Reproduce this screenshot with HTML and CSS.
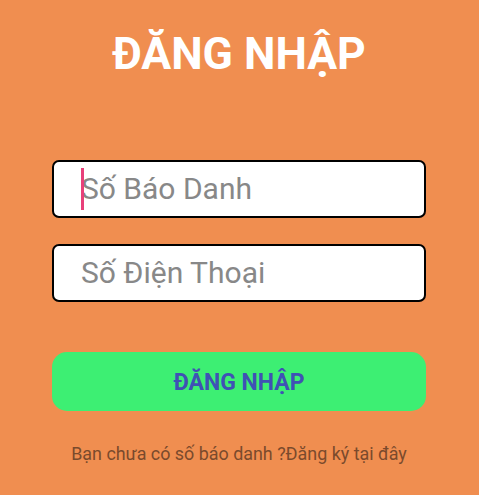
FILE: index.html
```html
<!DOCTYPE html>
<html lang="vi">
<head>
<meta charset="utf-8">
<link rel="stylesheet" href="styles.css">
</head>
<body>
<main class="screen">
  <h1 class="title">ĐĂNG NHẬP</h1>
  <div class="field first"><span class="caret"></span><span class="ph">Số Báo Danh</span></div>
  <div class="field"><span class="ph">Số Điện Thoại</span></div>
  <button class="btn">ĐĂNG NHẬP</button>
  <p class="footer">Bạn chưa có số báo danh ?Đăng ký tại đây</p>
</main>
</body>
</html>
```
FILE: styles.css
```css
html, body {
  margin: 0;
  padding: 0;
  background: #F08E50;
}
.screen {
  width: 479px;
  height: 495px;
  box-sizing: border-box;
  padding: 0 53px 0 52px;
  display: flex;
  flex-direction: column;
  font-family: Roboto, "Noto Sans", sans-serif;
}
.title {
  margin: 26px 0 0;
  text-align: center;
  color: #fff;
  font-size: 44.5px;
  font-weight: 700;
  line-height: 56px;
}
.field {
  margin-top: 78px;
  height: 58px;
  box-sizing: border-box;
  border: 2px solid #000;
  border-radius: 7px;
  background: #fff;
  display: flex;
  align-items: center;
  padding-left: 27px;
  position: relative;
}
.field + .field {
  margin-top: 26px;
}
.ph {
  color: #888;
  font-size: 30px;
  line-height: 32px;
}
.caret {
  position: absolute;
  left: 27px;
  top: 6px;
  width: 3px;
  height: 42px;
  background: #E8407A;
}
.btn {
  margin-top: 50px;
  height: 59px;
  border: 0;
  border-radius: 15px;
  background: #3DEF73;
  color: #3F51B5;
  font-family: Roboto, sans-serif;
  font-weight: 700;
  font-size: 23px;
  padding: 2px 0 0;
}
.footer {
  margin: 32px 0 0;
  text-align: center;
  color: #7A4A2C;
  font-size: 17.9px;
  line-height: 22px;
}
```
